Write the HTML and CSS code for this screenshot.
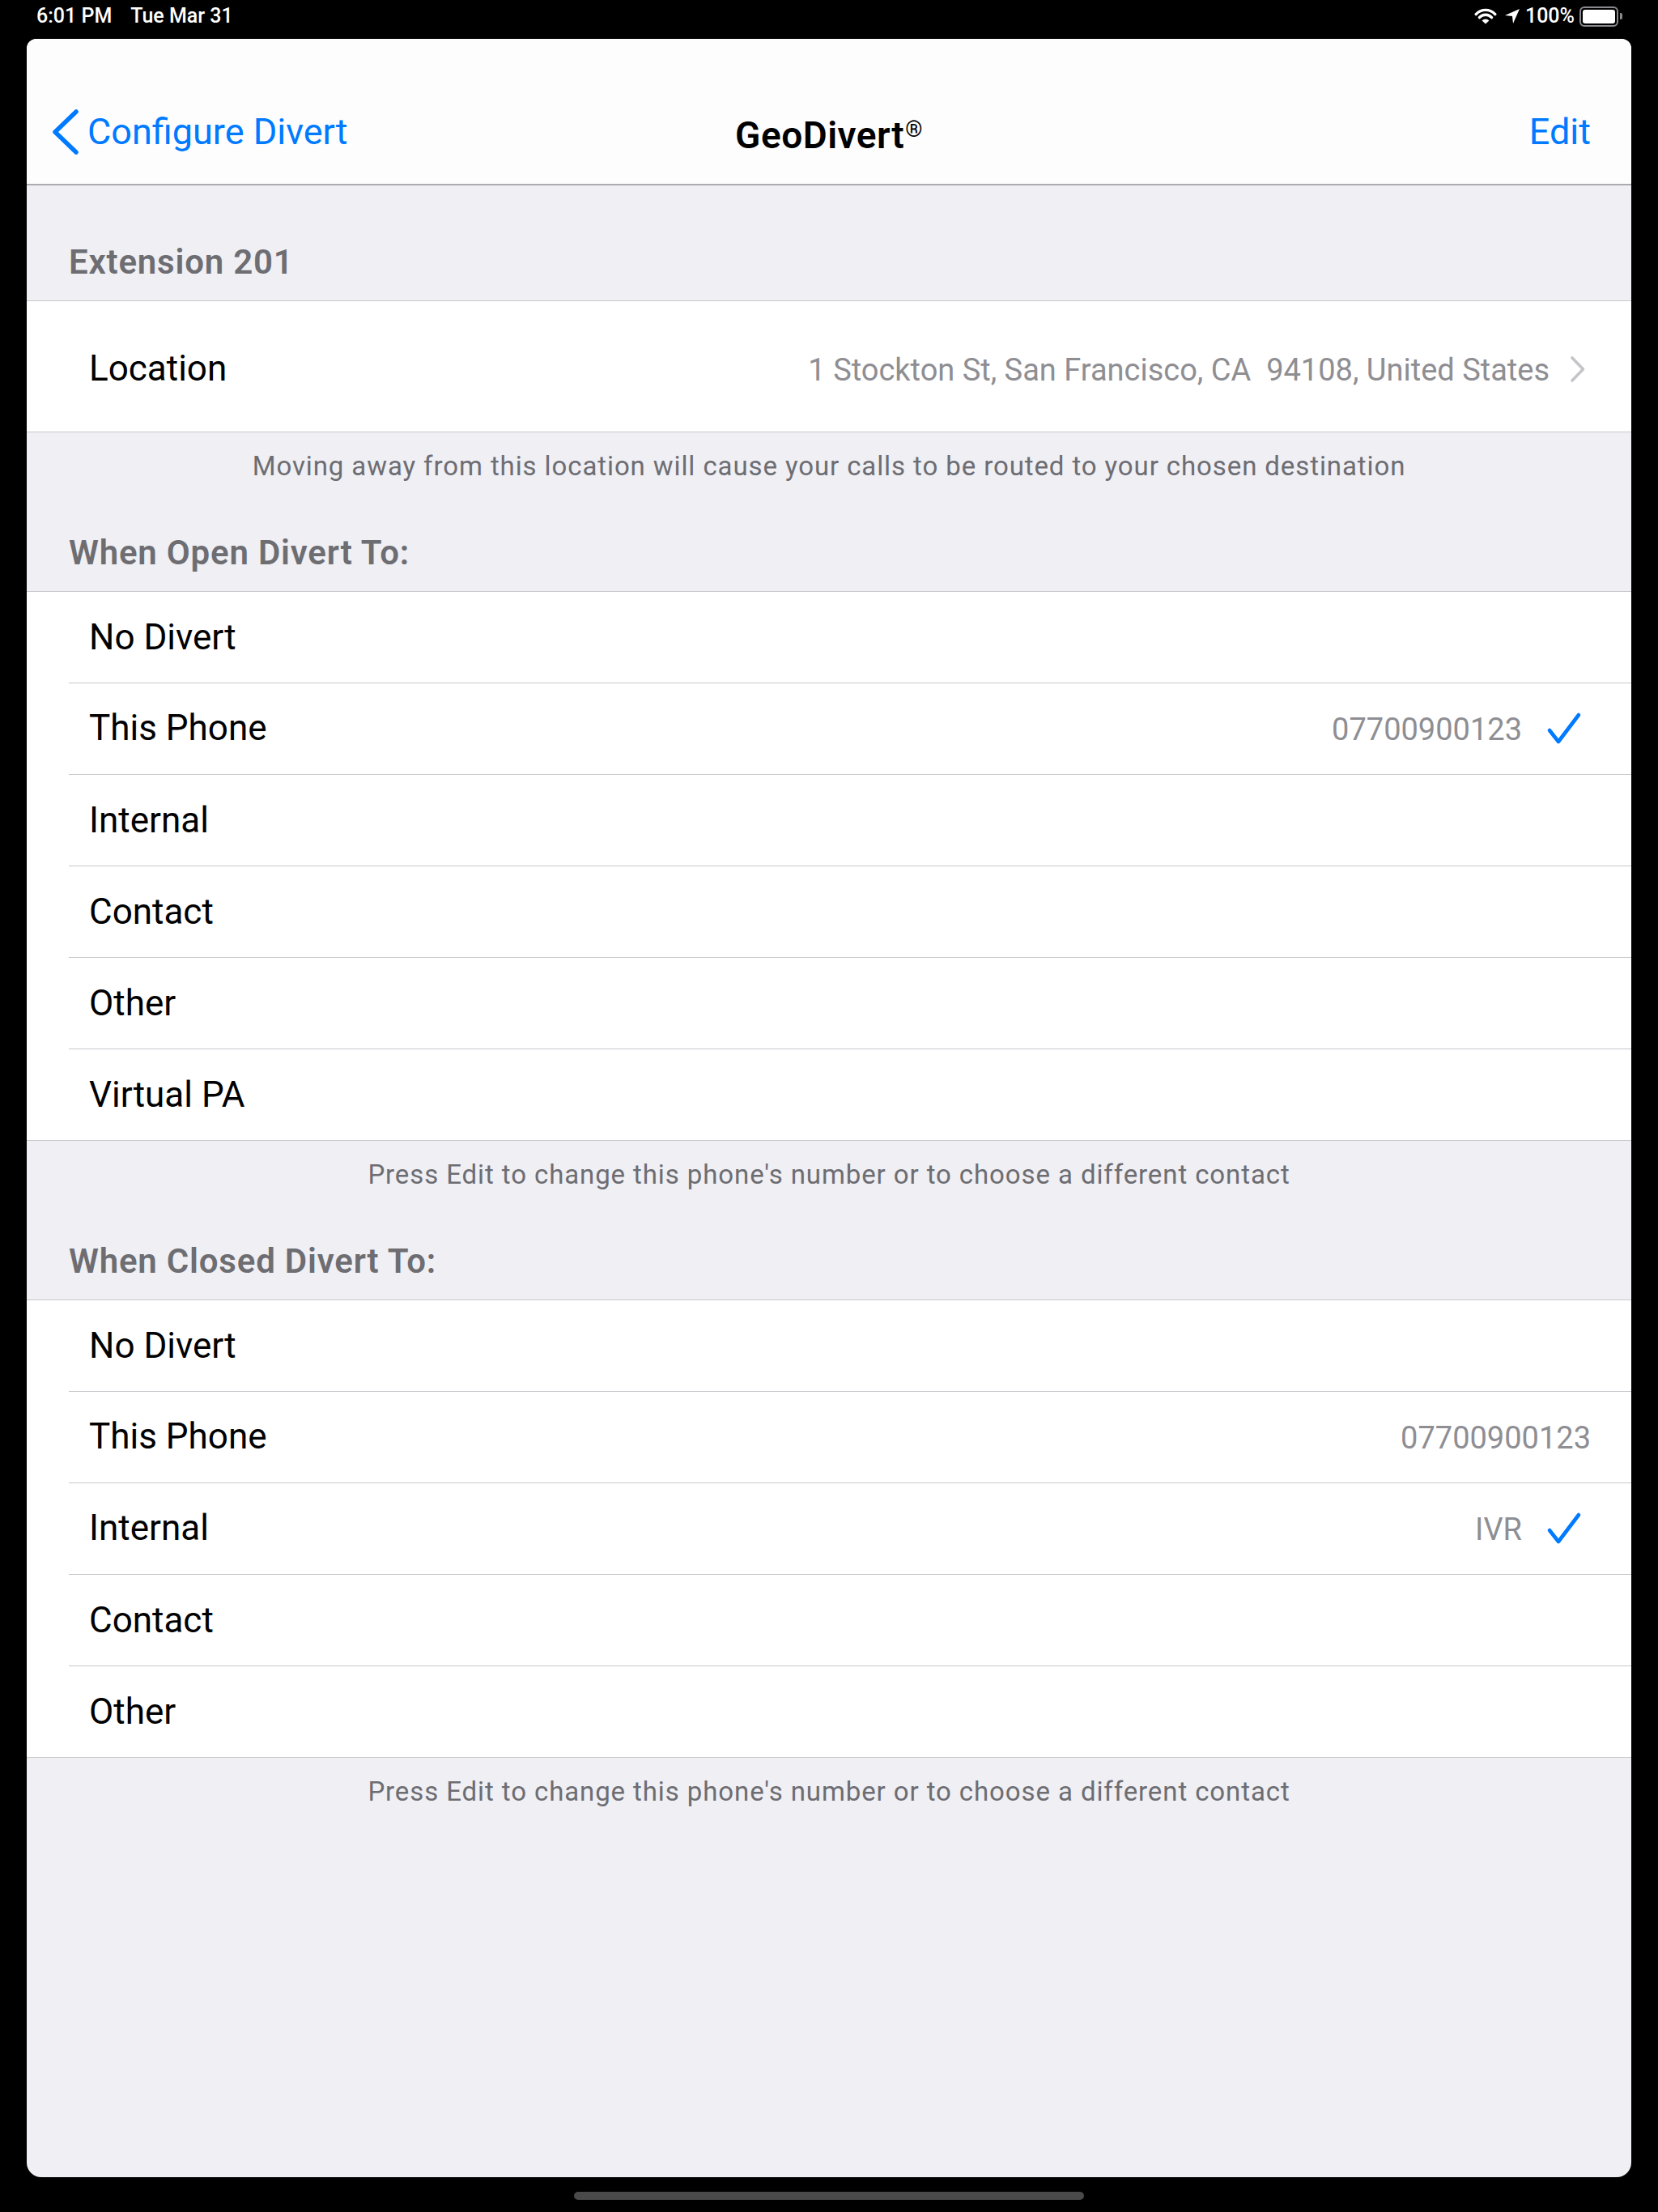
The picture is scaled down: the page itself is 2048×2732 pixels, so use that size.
FILE: index.html
```html
<!DOCTYPE html>
<html lang="en">
<head>
    <meta charset="UTF-8">
    <meta name="viewport" content="width=device-width, initial-scale=1.0">
    <title>GeoDivert</title>
    <link rel="stylesheet" href="styles.css">
</head>
<body>
    <div class="status-bar">
        <div class="status-left">
            <span>6:01 PM</span>
            <span>Tue Mar 31</span>
        </div>
        <div class="status-right">
            <svg class="wifi" width="28" height="21" viewBox="0 0 28 21">
                <path d="M2.2 7.6 A16 16 0 0 1 25.8 7.6" fill="none" stroke="#fff" stroke-width="3.4" stroke-linecap="round"/>
                <path d="M6.4 11.6 A10.2 10.2 0 0 1 21.6 11.6" fill="none" stroke="#fff" stroke-width="3.4" stroke-linecap="round"/>
                <path d="M14 19.6 L9.6 15.4 A6 6 0 0 1 18.4 15.4 Z" fill="#fff"/>
            </svg>
            <svg class="arrow" width="20" height="20" viewBox="0 0 20 20">
                <path d="M1 9 L19 1 L11 19 L10 10 Z" fill="#fff"/>
            </svg>
            <span class="battery-text">100%</span>
            <div class="battery">
                <div class="battery-body"><div class="battery-fill"></div></div>
                <div class="battery-nub"></div>
            </div>
        </div>
    </div>

    <div class="sheet">
        <div class="nav-bar">
            <div class="nav-back">
                <svg width="34" height="56" viewBox="0 0 34 56">
                    <path d="M30 3 L4 28 L30 53" fill="none" stroke="#007aff" stroke-width="5.5" stroke-linecap="round" stroke-linejoin="round"/>
                </svg>
                <span>Configure Divert</span>
            </div>
            <div class="nav-title">GeoDivert<span class="reg">®</span></div>
            <div class="nav-edit">Edit</div>
        </div>

        <div class="table">
            <div class="section-header first">Extension 201</div>
            <div class="group">
                <div class="cell cell-tall">
                    <div class="cell-inner">
                        <div class="cell-text">
                            <span class="label">Location</span>
                            <span class="value">1 Stockton St, San Francisco, CA&nbsp; 94108, United States</span>
                        </div>
                        <svg class="disclosure" width="20" height="34" viewBox="0 0 20 34">
                            <path d="M3 3 L16.5 17 L3 31" fill="none" stroke="#c4c4c9" stroke-width="3.6" stroke-linecap="round" stroke-linejoin="round"/>
                        </svg>
                    </div>
                </div>
            </div>
            <div class="section-footer">Moving away from this location will cause your calls to be routed to your chosen destination</div>

            <div class="section-header">When Open Divert To:</div>
            <div class="group">
                <div class="cell"><div class="cell-inner"><div class="cell-text"><span class="label">No Divert</span></div></div></div>
                <div class="cell">
                    <div class="cell-inner">
                        <div class="cell-text">
                            <span class="label">This Phone</span>
                            <span class="value">07700900123</span>
                        </div>
                        <svg class="check" width="44" height="44" viewBox="0 0 44 44">
                            <path d="M4 24 L15 38 L40 5" fill="none" stroke="#007aff" stroke-width="4.6" stroke-linecap="round" stroke-linejoin="round"/>
                        </svg>
                    </div>
                </div>
                <div class="cell"><div class="cell-inner"><div class="cell-text"><span class="label">Internal</span></div></div></div>
                <div class="cell"><div class="cell-inner"><div class="cell-text"><span class="label">Contact</span></div></div></div>
                <div class="cell"><div class="cell-inner"><div class="cell-text"><span class="label">Other</span></div></div></div>
                <div class="cell"><div class="cell-inner"><div class="cell-text"><span class="label">Virtual PA</span></div></div></div>
            </div>
            <div class="section-footer">Press Edit to change this phone's number or to choose a different contact</div>

            <div class="section-header">When Closed Divert To:</div>
            <div class="group">
                <div class="cell"><div class="cell-inner"><div class="cell-text"><span class="label">No Divert</span></div></div></div>
                <div class="cell">
                    <div class="cell-inner">
                        <div class="cell-text">
                            <span class="label">This Phone</span>
                            <span class="value">07700900123</span>
                        </div>
                    </div>
                </div>
                <div class="cell">
                    <div class="cell-inner">
                        <div class="cell-text">
                            <span class="label">Internal</span>
                            <span class="value">IVR</span>
                        </div>
                        <svg class="check" width="44" height="44" viewBox="0 0 44 44">
                            <path d="M4 24 L15 38 L40 5" fill="none" stroke="#007aff" stroke-width="4.6" stroke-linecap="round" stroke-linejoin="round"/>
                        </svg>
                    </div>
                </div>
                <div class="cell"><div class="cell-inner"><div class="cell-text"><span class="label">Contact</span></div></div></div>
                <div class="cell"><div class="cell-inner"><div class="cell-text"><span class="label">Other</span></div></div></div>
            </div>
            <div class="section-footer">Press Edit to change this phone's number or to choose a different contact</div>
        </div>
    </div>

    <div class="home-area">
        <div class="home-indicator"></div>
    </div>
</body>
</html>
```

FILE: styles.css
```css
html, body {
    margin: 0;
    padding: 0;
    background: #000;
}
body {
    width: 2048px;
    height: 2732px;
    overflow: hidden;
    font-family: Roboto, "Liberation Sans", Arial, sans-serif;
    display: flex;
    flex-direction: column;
}

/* status bar */
.status-bar {
    height: 48px;
    box-sizing: border-box;
    padding: 6px 44px 0 45px;
    display: flex;
    justify-content: space-between;
    align-items: flex-start;
    color: #fff;
    font-size: 25px;
    font-weight: 500;
    line-height: 28px;
}
.status-left {
    display: flex;
    gap: 23px;
}
.status-right {
    display: flex;
    align-items: center;
    height: 28px;
}
.wifi {
    margin-right: 9px;
}
.arrow {
    margin-right: 6px;
}
.battery-text {
    margin-right: 6px;
}
.battery {
    display: flex;
    align-items: center;
}
.battery-body {
    width: 40px;
    height: 17px;
    border: 2px solid #8a8a8e;
    border-radius: 6px;
    padding: 2px;
}
.battery-fill {
    width: 100%;
    height: 100%;
    background: #fff;
    border-radius: 3px;
}
.battery-nub {
    width: 3px;
    height: 8px;
    margin-left: 2px;
    background: #8a8a8e;
    border-radius: 0 2px 2px 0;
}

/* sheet */
.sheet {
    margin: 0 33px;
    height: 2641px;
    background: #efeff4;
    border-radius: 12px 12px 18px 18px;
    overflow: hidden;
}
.nav-bar {
    height: 128px;
    padding-top: 51px;
    background: #fdfdfd;
    border-bottom: 2px solid #ababae;
    display: grid;
    grid-template-columns: 1fr auto 1fr;
    align-items: center;
    font-size: 45px;
    line-height: 56px;
}
.nav-back {
    display: flex;
    align-items: center;
    padding-left: 31px;
    color: #007aff;
}
.nav-back svg {
    margin-right: 10px;
}
.nav-title {
    font-size: 46px;
    font-weight: 600;
    color: #000;
    letter-spacing: 0.5px;
}
.reg {
    font-size: 27px;
    font-weight: 500;
    vertical-align: 14px;
    margin-left: 1px;
}
.nav-edit {
    justify-self: end;
    padding-right: 50px;
    color: #007aff;
}

/* table */
.section-header {
    margin-top: 63px;
    padding: 0 52px 23px;
    font-size: 42px;
    font-weight: 600;
    letter-spacing: 0.8px;
    line-height: 48px;
    color: #6d6d72;
}
.section-header.first {
    margin-top: 71px;
}
.group {
    background: #fff;
    border-top: 1px solid #c8c7cc;
    border-bottom: 1px solid #c8c7cc;
}
.cell {
    padding-left: 52px;
}
.cell-inner {
    height: 112px;
    padding: 0 50px 0 25px;
    display: flex;
    align-items: center;
    border-bottom: 1px solid #c8c7cc;
}
.cell:last-child .cell-inner {
    border-bottom: none;
}
.cell-tall .cell-inner {
    height: 155px;
    padding-top: 6px;
}
.cell-text {
    flex: 1;
    display: flex;
    align-items: baseline;
}
.label {
    flex: 1;
    font-size: 44px;
    line-height: 52px;
    color: #000;
}
.value {
    font-size: 38px;
    line-height: 52px;
    color: #8e8e93;
}
.check {
    margin-left: 30px;
    margin-right: 11px;
}
.disclosure {
    margin-left: 25px;
    margin-right: 6px;
}
.section-footer {
    padding: 22px 52px 0;
    text-align: center;
    font-size: 33px;
    letter-spacing: 0.9px;
    line-height: 40px;
    color: #6d6d72;
}

/* home indicator */
.home-area {
    flex: 1;
    display: flex;
    justify-content: center;
    padding-top: 18px;
}
.home-indicator {
    width: 630px;
    height: 10px;
    border-radius: 5px;
    background: #4a4a4a;
}
```
